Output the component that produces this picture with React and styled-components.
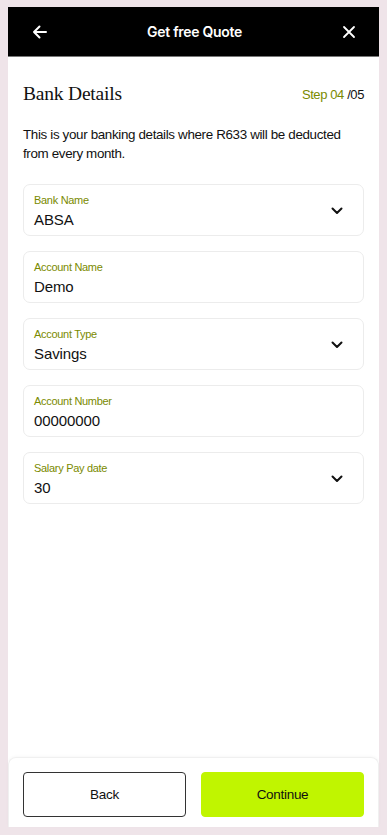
import React from 'react';
import styled, { createGlobalStyle } from 'styled-components';

const GlobalStyle = createGlobalStyle`
  html, body {
    margin: 0;
    padding: 0;
    background: #efe4e9;
  }
  body {
    font-family: "Liberation Sans", Arial, sans-serif;
    color: #111;
  }
`;

const Page = styled.div`
  padding: 7px 8px 8px;
  height: 835px;
  box-sizing: border-box;
`;

const Panel = styled.div`
  height: 820px;
  background: #fff;
  display: flex;
  flex-direction: column;
`;

const TopBar = styled.div`
  height: 50px;
  background: #000;
  border-bottom: 1px solid #777;
  box-sizing: border-box;
  display: flex;
  align-items: center;
  justify-content: space-between;
  padding: 0 20px 0 22px;
  color: #fff;
  h1 {
    margin: 0;
    font-family: Inter, "Liberation Sans", sans-serif;
    font-size: 14px;
    font-weight: 600;
    letter-spacing: -0.3px;
  }
`;

const IconBtn = styled.button`
  width: 20px;
  height: 20px;
  padding: 0;
  border: none;
  background: transparent;
  display: flex;
  align-items: center;
  justify-content: center;
  cursor: pointer;
`;

const Content = styled.div`
  flex: 1;
  padding: 26px 15px 0;
`;

const TitleRow = styled.div`
  display: flex;
  justify-content: space-between;
  align-items: center;
  h2 {
    margin: 0;
    font-family: "Liberation Serif", "Times New Roman", serif;
    font-weight: 400;
    font-size: 19.5px;
    letter-spacing: -0.2px;
    color: #111;
  }
`;

const Step = styled.div`
  font-size: 13px;
  letter-spacing: -0.4px;
  color: #111;
  span {
    color: #7a8a00;
  }
`;

const Intro = styled.p`
  margin: 20px 0 21px;
  font-size: 13.4px;
  line-height: 19px;
  letter-spacing: -0.35px;
  color: #111;
`;

const Fields = styled.div`
  display: flex;
  flex-direction: column;
  gap: 15px;
`;

const FieldBox = styled.div`
  height: 52px;
  box-sizing: border-box;
  border: 1px solid #ececec;
  border-radius: 7px;
  padding: 0 10px;
  display: flex;
  align-items: center;
  justify-content: space-between;
`;

const FieldText = styled.div`
  display: flex;
  flex-direction: column;
  align-self: flex-start;
  padding-top: 9px;
  label {
    font-size: 11px;
    letter-spacing: -0.3px;
    color: #7a8a00;
    line-height: 13px;
  }
  div {
    margin-top: 3px;
    font-size: 15px;
    line-height: 20px;
    letter-spacing: -0.1px;
    color: #111;
  }
`;

const ChevronIcon = styled.svg`
  margin-right: 10px;
  margin-top: 1px;
`;

const Chevron = () => (
  <ChevronIcon width="12" height="8" viewBox="0 0 12 8">
    <path d="M1.5 1.5 L6 6 L10.5 1.5" fill="none" stroke="#111" strokeWidth="2" strokeLinecap="round" strokeLinejoin="round" />
  </ChevronIcon>
);

const Field = ({ label, value, select }) => (
  <FieldBox>
    <FieldText>
      <label>{label}</label>
      <div>{value}</div>
    </FieldText>
    {select && <Chevron />}
  </FieldBox>
);

const Footer = styled.div`
  border: 1px solid #f0f0f0;
  border-bottom: none;
  border-radius: 8px 8px 0 0;
  box-shadow: 0 -1px 3px rgba(0, 0, 0, 0.03);
  padding: 14px 14px 10px;
  display: grid;
  grid-template-columns: 1fr 1fr;
  gap: 15px;
`;

const ActionButton = styled.button`
  height: 45px;
  border-radius: 4px;
  font-family: "Liberation Sans", Arial, sans-serif;
  font-size: 13.5px;
  letter-spacing: -0.3px;
  color: #111;
  cursor: pointer;
  background: ${p => (p.primary ? '#c0f500' : '#fff')};
  border: 1px solid ${p => (p.primary ? '#c0f500' : '#333')};
`;

const fields = [
  { label: 'Bank Name', value: 'ABSA', select: true },
  { label: 'Account Name', value: 'Demo' },
  { label: 'Account Type', value: 'Savings', select: true },
  { label: 'Account Number', value: '00000000' },
  { label: 'Salary Pay date', value: '30', select: true },
];

export default function App() {
  return (
    <Page>
      <GlobalStyle />
      <Panel>
        <TopBar>
          <IconBtn aria-label="Back">
            <svg width="18" height="18" viewBox="0 0 18 18">
              <path d="M15 9 H3 M8.5 3.5 L3 9 L8.5 14.5" fill="none" stroke="#fff" strokeWidth="2" strokeLinecap="round" strokeLinejoin="round" />
            </svg>
          </IconBtn>
          <h1>Get free Quote</h1>
          <IconBtn aria-label="Close">
            <svg width="16" height="16" viewBox="0 0 16 16">
              <path d="M3 3 L13 13 M13 3 L3 13" fill="none" stroke="#fff" strokeWidth="1.8" strokeLinecap="round" />
            </svg>
          </IconBtn>
        </TopBar>
        <Content>
          <TitleRow>
            <h2>Bank Details</h2>
            <Step><span>Step 04 </span>/05</Step>
          </TitleRow>
          <Intro>This is your banking details where R633 will be deducted from every month.</Intro>
          <Fields>
            {fields.map(f => (
              <Field key={f.label} {...f} />
            ))}
          </Fields>
        </Content>
        <Footer>
          <ActionButton>Back</ActionButton>
          <ActionButton primary>Continue</ActionButton>
        </Footer>
      </Panel>
    </Page>
  );
}
